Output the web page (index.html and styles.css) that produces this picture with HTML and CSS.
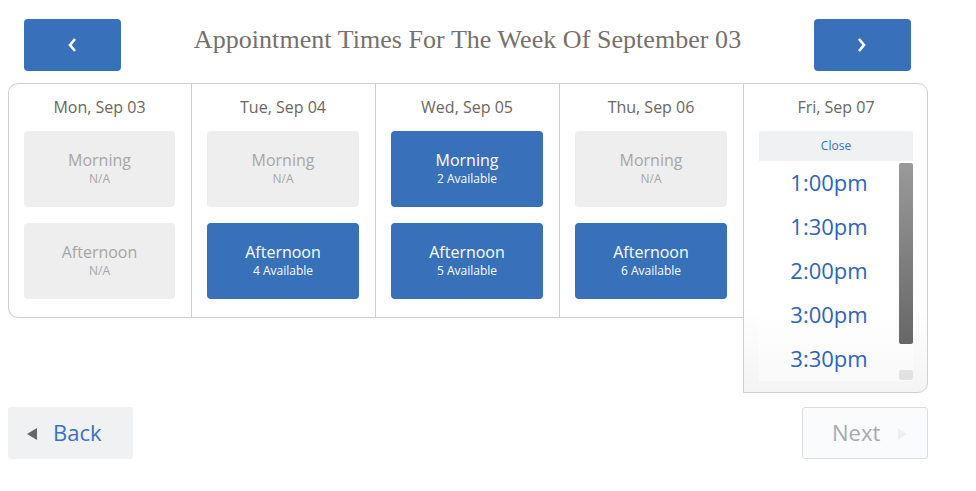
FILE: index.html
```html
<!DOCTYPE html>
<html lang="en">
<head>
    <meta charset="UTF-8">
    <meta name="viewport" content="width=device-width, initial-scale=1.0">
    <title>Appointment Times</title>
    <link rel="stylesheet" href="styles.css">
</head>
<body>
    <div class="week-header">
        <button class="week-nav" aria-label="Previous week">
            <svg width="10" height="16" viewBox="0 0 10 16"><polyline points="8,2 3,8 8,14" fill="none" stroke="#fff" stroke-width="2.6"/></svg>
        </button>
        <h1 class="week-title">Appointment Times For The Week Of September 03</h1>
        <button class="week-nav" aria-label="Next week">
            <svg width="10" height="16" viewBox="0 0 10 16"><polyline points="2,2 7,8 2,14" fill="none" stroke="#fff" stroke-width="2.6"/></svg>
        </button>
    </div>

    <div class="calendar">
        <div class="day first">
            <div class="day-name">Mon, Sep 03</div>
            <div class="slot off"><span class="slot-name">Morning</span><span class="slot-count">N/A</span></div>
            <div class="slot off"><span class="slot-name">Afternoon</span><span class="slot-count">N/A</span></div>
        </div>
        <div class="day">
            <div class="day-name">Tue, Sep 04</div>
            <div class="slot off"><span class="slot-name">Morning</span><span class="slot-count">N/A</span></div>
            <div class="slot open"><span class="slot-name">Afternoon</span><span class="slot-count">4 Available</span></div>
        </div>
        <div class="day">
            <div class="day-name">Wed, Sep 05</div>
            <div class="slot open"><span class="slot-name">Morning</span><span class="slot-count">2 Available</span></div>
            <div class="slot open"><span class="slot-name">Afternoon</span><span class="slot-count">5 Available</span></div>
        </div>
        <div class="day">
            <div class="day-name">Thu, Sep 06</div>
            <div class="slot off"><span class="slot-name">Morning</span><span class="slot-count">N/A</span></div>
            <div class="slot open"><span class="slot-name">Afternoon</span><span class="slot-count">6 Available</span></div>
        </div>
        <div class="day last">
            <div class="day-name">Fri, Sep 07</div>
            <div class="times-close">Close</div>
            <div class="times-wrap">
                <ul class="times">
                    <li>1:00pm</li>
                    <li>1:30pm</li>
                    <li>2:00pm</li>
                    <li>3:00pm</li>
                    <li>3:30pm</li>
                </ul>
                <div class="scroll-track">
                    <div class="scroll-thumb"></div>
                    <div class="scroll-down"></div>
                </div>
            </div>
        </div>
    </div>

    <div class="wizard-nav">
        <button class="wizard-btn back">
            <span class="tri-left"></span>
            <span>Back</span>
        </button>
        <button class="wizard-btn next" disabled>
            <span>Next</span>
            <span class="tri-right"></span>
        </button>
    </div>
</body>
</html>
```

FILE: styles.css
```css
body {
    margin: 0;
    padding: 19px 8px 0 8px;
    background-color: #fff;
    font-family: 'Open Sans', sans-serif;
    color: #6b6661;
}

button {
    font-family: inherit;
    cursor: pointer;
}

.week-header {
    width: 920px;
    box-sizing: border-box;
    padding: 0 17px 0 16px;
    display: flex;
    justify-content: space-between;
    align-items: center;
}

.week-nav {
    width: 97px;
    height: 52px;
    border: none;
    border-radius: 4px;
    background-color: #3870b9;
    display: flex;
    justify-content: center;
    align-items: center;
    padding: 0 1px 0 0;
}

.week-title {
    margin: 0 0 10px 0;
    font-family: 'Liberation Serif', serif;
    font-weight: normal;
    font-size: 26px;
    letter-spacing: 0.05px;
    color: #75706b;
}

.calendar {
    width: 920px;
    margin-top: 12px;
    display: flex;
    align-items: flex-start;
}

.day {
    width: 184px;
    box-sizing: border-box;
    padding: 0 16px 18px 15px;
    border-top: 1px solid #cfcfcf;
    border-bottom: 1px solid #cfcfcf;
    border-left: 1px solid #cfcfcf;
}

.day.first {
    width: 183px;
    border-radius: 10px 0 0 10px;
}

.day.last {
    width: 185px;
    padding: 0 14px 11px 15px;
    border-right: 1px solid #cfcfcf;
    border-radius: 0 10px 10px 0;
    background: linear-gradient(to bottom, #fff 72%, #f4f4f4);
}

.day-name {
    height: 47px;
    line-height: 46px;
    text-align: center;
    font-size: 16px;
    color: #6b6661;
}

.slot {
    height: 76px;
    border-radius: 4px;
    display: flex;
    flex-direction: column;
    justify-content: center;
    align-items: center;
    padding-bottom: 2px;
    box-sizing: border-box;
}

.slot + .slot {
    margin-top: 16px;
}

.slot.off {
    background-color: #eeeeee;
    color: #a6a6a6;
}

.slot.open {
    background-color: #3870b9;
    color: #fff;
    cursor: pointer;
}

.slot-name {
    font-size: 16px;
    line-height: 21px;
}

.slot-count {
    font-size: 12px;
    line-height: 16px;
}

.times-close {
    height: 30px;
    line-height: 30px;
    background-color: #f0f1f3;
    border-radius: 3px 3px 0 0;
    text-align: center;
    font-size: 12px;
    color: #3a70c0;
}

.times-wrap {
    height: 220px;
    display: flex;
    background: linear-gradient(to bottom, #fff 70%, #f9f9f9);
}

.times {
    flex: 1;
    list-style: none;
    margin: 0;
    padding: 0;
}

.times li {
    height: 44px;
    line-height: 42px;
    text-align: center;
    font-size: 22px;
    color: #3163b6;
}

.scroll-track {
    width: 14px;
    display: flex;
    flex-direction: column;
    justify-content: space-between;
    padding: 2px 0 1px 0;
}

.scroll-thumb {
    height: 181px;
    background: linear-gradient(to bottom, #9a9a9a, #676767);
    border-radius: 2px;
}

.scroll-down {
    height: 10px;
    background: #e2e2e2;
    border-radius: 2px;
}

.wizard-nav {
    width: 920px;
    margin-top: 14px;
    display: flex;
    justify-content: space-between;
}

.wizard-btn {
    width: 125px;
    height: 52px;
    border-radius: 3px;
    font-size: 22px;
    display: flex;
    align-items: center;
    padding-bottom: 3px;
}

.wizard-btn.back {
    border: none;
    background-color: #f0f1f3;
    color: #3a70c0;
    padding-left: 19px;
    gap: 16px;
}

.wizard-btn.next {
    width: 126px;
    height: 52px;
    border: 1px solid #dcdde0;
    background-color: #fafbfc;
    color: #a9a9ab;
    padding-left: 29px;
    gap: 18px;
    cursor: default;
}

.tri-left {
    width: 0;
    height: 0;
    margin-top: 3px;
    border-top: 6px solid transparent;
    border-bottom: 6px solid transparent;
    border-right: 10px solid #666;
}

.tri-right {
    width: 0;
    height: 0;
    margin-top: 3px;
    border-top: 6px solid transparent;
    border-bottom: 6px solid transparent;
    border-left: 8px solid #eeeff1;
}
```
